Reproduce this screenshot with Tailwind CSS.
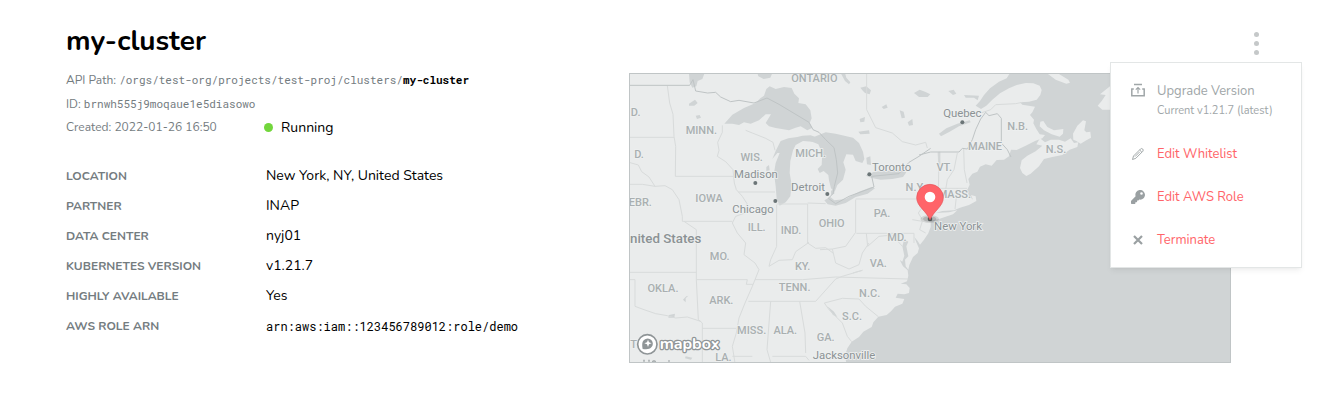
<!DOCTYPE html>
<html lang="en">
<head>
<meta charset="utf-8">
<meta name="viewport" content="width=device-width, initial-scale=1">
<title>my-cluster</title>
<script src="https://cdn.jsdelivr.net/npm/@tailwindcss/browser@4"></script>
</head>
<body class="bg-white text-black font-[Nunito,Lato,sans-serif] text-[14px]">
<main class="pl-[66px] pr-[76px] pt-5 pb-10">
  <header class="flex h-[42px] items-center justify-between">
    <h1 class="text-[28px] leading-[42px] font-bold">my-cluster</h1>
    <div class="relative flex h-full items-center">
      <button type="button" aria-label="Cluster actions" aria-expanded="true" class="flex w-6 flex-col items-center gap-1 pt-1">
        <span class="size-[5px] rounded-full bg-[#c5c8c9]"></span>
        <span class="size-[5px] rounded-full bg-[#c5c8c9]"></span>
        <span class="size-[5px] rounded-full bg-[#c5c8c9]"></span>
      </button>
      <div class="absolute top-full -right-[34px] z-10 flex w-48 flex-col gap-[23px] border border-[#e3e6e6] bg-white pt-[18px] pb-[17px] pl-5 text-[13px] leading-5 text-[#ff6469] shadow-md shadow-black/5">
        <button type="button" disabled class="flex gap-3 text-left text-[#a0a6a8]">
          <svg class="mt-[2px] size-[14px] shrink-0" viewBox="0 0 14 14" fill="none" stroke="currentColor" aria-hidden="true"><path d="M3 1.500h8M.8 5.500V12.700h12.400V5.500M.2 6h2.600M11.200 6h2.600" stroke-width="1.500"/><path d="M7 10.500V4.500M4.800 6.700 7 4.500l2.200 2.200" stroke-width="1.200"/></svg>
          <span><span class="block">Upgrade Version</span><span class="block text-[11px]">Current v1.21.7 (latest)</span></span>
        </button>
        <button type="button" class="flex items-center gap-3 text-left">
          <svg class="size-[14px] shrink-0 text-[#9aa0a2]" viewBox="0 0 14 14" fill="none" stroke="currentColor" stroke-linejoin="round" aria-hidden="true"><path d="m1.500 12.500 1-3.500 7-7q1.200-1 2.200 0t.1 2.300l-7 7zM8.700 3l2.200 2.200M4 9.600l4.800-4.800" stroke-width=".9"/></svg>
          Edit Whitelist
        </button>
        <button type="button" class="flex items-center gap-3 text-left">
          <svg class="size-[14px] shrink-0 text-[#9aa0a2]" viewBox="0 0 512 512" fill="currentColor" aria-hidden="true"><path d="M512 176c0 97-79 176-176 176-11 0-22-1-33-3l-24 27a24 24 0 0 1-18 8h-37v40a24 24 0 0 1-24 24h-40v40a24 24 0 0 1-24 24H24a24 24 0 0 1-24-24v-78a24 24 0 0 1 7-17l162-162A176 176 0 1 1 512 176zM336 128a48 48 0 1 0 96 0 48 48 0 1 0-96 0z"/></svg>
          Edit AWS Role
        </button>
        <button type="button" class="flex items-center gap-3 text-left">
          <svg class="size-[14px] shrink-0 text-[#9aa0a2]" viewBox="0 0 14 14" fill="none" stroke="currentColor" stroke-width="2.200" aria-hidden="true"><path d="m3 3 8 8M11 3l-8 8"/></svg>
          Terminate
        </button>
      </div>
    </div>
  </header>

  <div class="mr-[37px] grid grid-cols-[563fr_602fr]">
    <section class="pt-[6px]">
      <div class="text-[12px] leading-6 text-[#747c7f]">
        <p>API Path: <code class="font-['Roboto_Mono','Liberation_Mono',monospace] text-[11px]">/orgs/test-org/projects/test-proj/clusters/<b class="text-black">my-cluster</b></code></p>
        <p>ID: <code class="font-['Roboto_Mono','Liberation_Mono',monospace] text-[11px]">brnwh555j9moqaue1e5diasowo</code></p>
        <div class="grid grid-cols-[198px_1fr] items-center leading-[23px]">
          <p>Created: 2022-01-26 16:50</p>
          <p class="flex items-center gap-2 text-[14px] text-black"><span class="size-[9px] rounded-full bg-[#72d63c]"></span>Running</p>
        </div>
      </div>
      <dl class="mt-[22px] grid grid-cols-[200px_1fr] leading-[30px]">
        <dt class="text-[12px] font-bold text-[#747c7f]">LOCATION</dt><dd>New York, NY, United States</dd>
        <dt class="text-[12px] font-bold text-[#747c7f]">PARTNER</dt><dd>INAP</dd>
        <dt class="text-[12px] font-bold text-[#747c7f]">DATA CENTER</dt><dd>nyj01</dd>
        <dt class="text-[12px] font-bold text-[#747c7f]">KUBERNETES VERSION</dt><dd>v1.21.7</dd>
        <dt class="text-[12px] font-bold text-[#747c7f]">HIGHLY AVAILABLE</dt><dd>Yes</dd>
        <dt class="text-[12px] font-bold text-[#747c7f]">AWS ROLE ARN</dt><dd class="font-['Roboto_Mono','Liberation_Mono',monospace] text-[12px]">arn:aws:iam::123456789012:role/demo</dd>
      </dl>
    </section>

    <figure class="mt-[11px]">
      <svg class="block w-full font-[Roboto,sans-serif]" viewBox="0 0 1806 870" role="img" aria-label="Map of the cluster location in New York">
        <rect width="1806" height="870" fill="#d0d4d5"/>
        <!-- land -->
        <g fill="#eaecec">
          <path d="M0 0H1143L1133 16 1110 26 1083 46 1065 66 1053 84 1040 98 1056 108 1072 98 1090 80 1113 61 1140 46 1163 36 1190 30 1213 31 1232 38 1238 51 1234 66 1223 80 1200 86 1173 88 1180 95 1218 101 1210 118 1203 126 1215 140 1213 151 1222 168 1232 184 1248 186 1240 196 1218 204 1190 218 1163 231 1146 230 1140 250 1125 260 1103 261 1088 278 1070 274 1053 281 1045 296 1030 302 1018 318 1022 335 1014 352 1020 368 1032 380 1026 366 1040 370 1042 384 1020 396 993 404 975 412 940 414 920 420 960 418 985 412 972 424 930 438 905 442 905 462 898 481 885 500 873 515 866 504 856 492 862 508 870 526 866 540 852 552 841 576 838 590 830 580 828 560 838 550 832 520 838 506 826 498 820 520 826 548 820 566 800 552 795 540 812 560 822 580 836 592 838 608 834 625 815 632 832 634 842 645 840 660 826 664 806 662 800 674 826 678 820 692 798 701 786 715 773 726 748 731 733 748 728 762 703 776 690 792 668 806 655 826 648 848 652 870H0Z"/>
          <path d="M1233 196 1248 208 1265 200 1290 200 1308 206 1325 196 1335 210 1348 208 1345 222 1322 230 1300 246 1270 252 1245 258 1230 280 1205 302 1192 309 1180 300 1173 285 1178 262 1195 248 1220 235 1240 218 1222 214Z"/>
          <path d="M1333 200 1332 182 1345 158 1362 142 1371 145 1366 172 1372 178 1384 176 1386 194 1372 202 1355 212 1342 204ZM1234 146 1243 144 1255 162 1275 172 1303 168 1302 182 1292 191 1268 184 1245 172 1232 160ZM1253 0 1290 3 1318 20 1323 29 1312 32 1280 20ZM1443 40 1428 52 1413 64 1430 66 1418 84 1406 98 1420 110 1450 110 1520 100 1600 30 1590 0 1460 0Z"/>
        </g>
        <!-- lakes and inland water -->
        <g fill="#d0d4d5">
          <path d="M286 152 310 125 345 105 380 90 394 76 405 68 412 48 422 40 440 48 465 42 488 45 496 62 510 76 508 90 530 94 544 112 548 136 542 150 550 164 535 172 515 160 500 164 480 172 458 168 440 165 420 160 410 150 426 124 410 124 390 142 365 152 345 148 330 156 310 152Z"/>
          <path d="M430 258 440 234 455 204 478 196 505 192 520 188 545 187 560 192 550 206 522 204 500 216 492 232 484 264 482 300 488 335 484 370 470 388 452 398 443 378 440 340 435 300 440 270 452 240 445 240Z"/>
          <path d="M538 202 560 190 590 178 620 182 646 188 672 194 690 210 702 236 706 258 700 270 680 264 672 245 652 244 643 268 650 290 642 320 625 336 617 356 606 346 600 322 598 306 584 294 572 300 566 288 578 276 580 240 568 214Z"/>
          <path d="M586 382 604 372 616 382 650 378 690 356 728 342 738 346 716 362 680 372 650 390 620 398 596 394ZM710 308 735 296 770 294 808 290 832 298 822 312 790 318 755 320 732 316ZM606 354 616 346 616 362 606 366Z"/>
          <path d="M180 2H226L220 18 206 24 202 40 190 44 182 28ZM180 92 198 80 206 90 196 98 180 98ZM200 128 212 126 216 134 204 138ZM385 0H430L424 14 404 18 388 10ZM635 0 648 0 652 14 664 28 660 34 648 24ZM694 44 712 40 726 52 722 64 708 60 702 54ZM855 60 872 50 888 56 904 64 896 72 870 72ZM958 54 974 50 982 62 972 66ZM1005 66 1050 68 1046 82 1035 74 1010 74ZM758 102 772 94 776 104 764 108ZM812 112 824 116 828 134 818 136ZM836 148 850 138 852 156 840 158ZM688 176 720 172 722 182 694 184ZM692 138 708 132 706 146 694 148ZM712 254 724 250 726 276 714 274ZM930 182 952 166 985 152 1022 142 1025 148 990 160 962 176 936 190ZM926 238 934 236 934 280 928 284ZM412 282 420 276 422 292 412 294Z"/>
          <path d="M162 680 172 670 178 668 170 676 170 688ZM120 726 138 722 136 734 118 734ZM170 850 190 854 186 860 168 856ZM595 700 615 716 625 732 612 726Z"/>
        </g>
        <!-- state borders -->
        <g fill="none" stroke="#d8dbdb" stroke-width="3" stroke-linejoin="round">
          <path d="M115 38 122 90 132 124 135 190 140 220 139 310M0 193H135M139 310H318M0 334H40L78 340 108 338 130 350 150 380 160 430M0 268 28 276 38 296 60 312 78 340M280 157 280 178 266 208 270 232 265 250 290 266 312 290 316 330 322 350M350 172 370 180 410 196 432 208 438 232M328 357H438M322 350 340 370 354 392 348 420 320 430 310 450 325 480 350 510 345 545 378 570 390 590M443 395V520L425 560 420 580M443 393H536V510M536 390 590 392M160 430 160 445H310M165 445 202 470V620M0 598H202M202 620H355L352 634 372 634M202 620 208 740 220 750V868M0 620H18V700L45 710 80 722 115 728 140 735 175 732 215 745M220 766H322M378 620H520L620 612M390 590 370 640 348 690 330 735 322 780 310 820 318 870M358 685H560L620 618 640 610 700 592M425 685 414 830 425 868M512 685 528 780 530 840M310 850H370M430 850H530L540 862M536 510 560 526 590 524 612 540M620 612 838 618M420 580 450 562 490 560 500 536 540 508M573 530 610 528 650 520 680 478V380M680 378H870M682 481H855V510M712 481 716 520 750 490 790 486 820 520M610 528 620 570 660 588 690 575 700 540 720 510M700 592 672 600M586 690 640 676 690 678 710 700 748 731M586 690 600 710 640 750 655 790 668 806M850 440 880 445 872 470 890 480M870 378 885 395 868 420 880 440M930 236 928 360M985 240 975 290 955 320 950 350M1004 226 1006 290 1014 330M905 346H1014M905 346 895 400M985 346 978 408M713 0 713 110 740 164 790 180 820 206 860 216 890 208 895 225M1056 120 1085 110 1100 95 1160 92 1180 88"/>
        </g>
        <g fill="none" stroke="#bfc4c5" stroke-width="3" stroke-linejoin="round">
          <path d="M0 37H182L192 20 200 54 236 60 260 58 275 72 305 86 330 82 375 90 414 75 450 94 540 148 552 170 570 178 590 200 615 224 622 260 626 300 616 340 612 362 598 376 620 392 660 370 735 342 728 310 810 302 840 268 870 250 905 226M870 246 905 237H990L1000 226 1015 228 1030 200 1040 170 1055 138 1070 118 1080 128 1105 122 1117 136V210L1135 230 1146 252"/>
        </g>
        <!-- state labels -->
        <g fill="#a9afb0" stroke="#eef0f0" stroke-width="5" paint-order="stroke" text-anchor="middle" font-size="33" font-weight="500">
          <text x="556" y="27">ONTARIO</text><text x="20" y="130">D.</text><text x="30" y="256">D.</text><text x="217" y="183">MINN.</text><text x="368" y="264">WIS.</text><text x="545" y="252">MICH.</text><text x="240" y="386">IOWA</text><text x="34" y="398">EBR.</text>
          <text x="383" y="474">ILL.</text><text x="486" y="484">IND.</text><text x="608" y="462">OHIO</text><text x="759" y="432">PA.</text><text x="272" y="560">MO.</text><text x="521" y="590">KY.</text><text x="102" y="658">OKLA.</text><text x="277" y="692">ARK.</text><text x="497" y="654">TENN.</text><text x="368" y="784">MISS.</text><text x="469" y="784">ALA.</text><text x="590" y="804">GA.</text><text x="283" y="864">LA.</text>
          <text x="859" y="354">N.Y.</text><text x="976" y="376">MASS.</text><text x="946" y="294">VT.</text><text x="1068" y="230">MAINE</text><text x="1166" y="170">N.B.</text><text x="1281" y="239">N.S.</text><text x="804" y="504">MD.</text><text x="748" y="582">VA.</text><text x="722" y="672">N.C.</text><text x="669" y="741">S.C.</text><text x="14" y="826">T</text>
        </g>
        <!-- city labels -->
        <g fill="#8b9294" stroke="#eef0f0" stroke-width="5" paint-order="stroke" text-anchor="middle" font-size="34">
          <text x="381" y="315">Madison</text><text x="372" y="419">Chicago</text><text x="537" y="355">Detroit</text><text x="788" y="293">Toronto</text><text x="1000" y="132">Quebec</text><text x="987" y="471">New York</text><text x="645" y="857">Jacksonville</text>
          <text x="3" y="511" text-anchor="start" font-size="40" font-weight="500">nited States</text>
        </g>
        <path d="M45 866v-6M60 866v-6M70 866q5-5 10 0M120 866v-4" stroke="#9aa0a2" stroke-width="4" fill="none"/>
        <g fill="#6b7577"><circle cx="379" cy="330" r="6"/><circle cx="439" cy="384" r="6"/><circle cx="595" cy="363" r="6"/><circle cx="721" cy="304" r="6"/><circle cx="1000" cy="148" r="6"/></g>
        <!-- location pin -->
        <g>
          <ellipse cx="902" cy="438" rx="28" ry="12" fill="#000" fill-opacity=".1"/>
          <ellipse cx="902" cy="438" rx="20" ry="8" fill="#000" fill-opacity=".15"/>
          <circle cx="903" cy="438" r="7" fill="#505657"/>
          <path d="M903 440C892 414 863 400 863 374a40 40 0 0 1 80 0c0 26-29 40-40 66Z" fill="#ff6469" stroke="#e2555b" stroke-width="2"/>
          <circle cx="903" cy="372" r="16" fill="#fff"/>
        </g>
        <!-- map provider mark -->
        <g>
          <circle cx="55" cy="814" r="29" fill="#fff" stroke="#8f9597" stroke-width="5"/>
          <path d="M41 828c-2-14-2-21 4-27a15 15 0 1 1 22 22c-6 6-13 7-26 5Z" fill="#8f9597"/>
          <path d="m57 800 3 8 8 3-8 3-3 8-3-8-8-3 8-3Z" fill="#fff"/>
          <text x="92" y="827" font-size="48" font-weight="700" class="font-[Nunito,sans-serif]" fill="#fff" stroke="#8f9597" stroke-width="8" stroke-linejoin="round" paint-order="stroke">mapbox</text>
        </g>
        <rect x="1.500" y="1.500" width="1803" height="867" fill="none" stroke="#c0c5c6" stroke-width="3"/>
      </svg>
    </figure>
  </div>
</main>
</body>
</html>
